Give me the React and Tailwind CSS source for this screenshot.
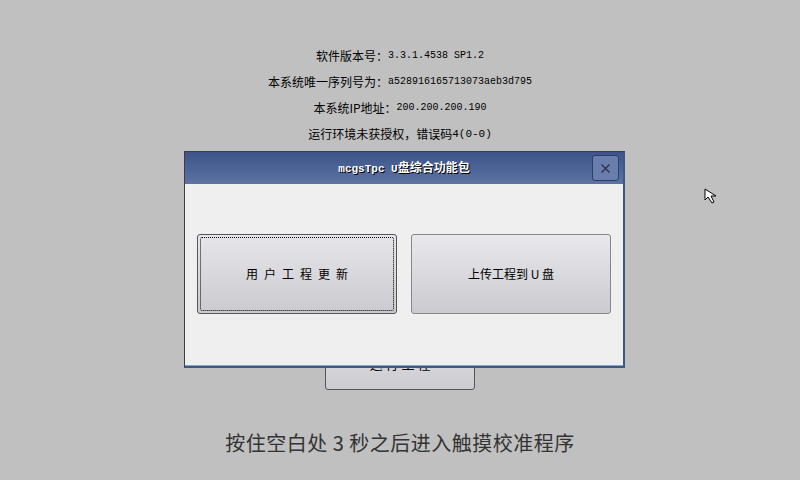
import React from 'react';

const cjk = { fontFamily: '"Noto Sans CJK SC", "Noto Sans", sans-serif' };

function InfoLine({ label, value }) {
    return (
        <div className="h-[26px] flex items-center text-[12px] text-black leading-none">
            <span style={cjk}>{label}</span>
            <span className="font-['Liberation_Mono',monospace] text-[10px]">{value}</span>
        </div>
    );
}

function Cursor() {
    return (
        <svg className="absolute left-[704px] top-[188px]" width="16" height="18" viewBox="0 0 16 18">
            <path d="M1 1 L1 12 L4 9 L8 15 L10 14 L7 8 L12 8 Z" fill="#fff" stroke="#000" strokeWidth="1" />
        </svg>
    );
}

export default function App() {
    return (
        <div className="relative w-[800px] h-[480px] overflow-hidden bg-[#c0c0c0]">
            <div className="flex flex-col items-center pt-[43px]">
                <InfoLine label="软件版本号：" value="3.3.1.4538 SP1.2" />
                <InfoLine label="本系统唯一序列号为：" value="a528916165713073aeb3d795" />
                <InfoLine label="本系统IP地址：" value="200.200.200.190" />
                <div className="h-[26px] flex items-center text-[12px] text-black leading-none" style={cjk}>
                    运行环境未获授权，错误码<span className="font-['Liberation_Mono',monospace] text-[11px]">4(0-0)</span>
                </div>

                <button className="mt-[183px] w-[150px] h-[60px] pt-[8px] rounded-[3px] border border-[#555] bg-gradient-to-b from-[#e4e4e8] to-[#cbcbd0] text-[13px] text-black" style={cjk}>
                    运 行 工 程
                </button>

                <div className="mt-[38px] text-[20px] text-[#333] tracking-[0.5px]" style={cjk}>
                    按住空白处 3 秒之后进入触摸校准程序
                </div>
            </div>

            <div className="absolute left-[184px] top-[151px] w-[441px] h-[217px] flex flex-col border border-[#3a3f4a] border-b-2 border-r-2 border-b-[#3e5a80] border-r-[#3e5a80] bg-[#efefef] shadow-[inset_0_-1px_0_#8aa3c8]">
                <div className="relative h-[32px] flex items-center justify-center bg-gradient-to-b from-[#3c5489] to-[#5e73a4]">
                    <span className="text-[12px] font-bold text-white [text-shadow:1px_1px_0_#000]" style={cjk}>
                        <span className="font-['Liberation_Mono',monospace] text-[11px]">mcgsTpc U</span>盘综合功能包
                    </span>
                    <div className="absolute right-[4px] top-[3px] w-[27px] h-[26px] flex items-center justify-center rounded-[3px] border border-[#2c3d66] bg-[#6a7eae]">
                        <svg width="11" height="11" viewBox="0 0 11 11">
                            <path d="M1.5 1.5 L9.5 9.5 M9.5 1.5 L1.5 9.5" stroke="#2e3446" strokeWidth="1.4" />
                        </svg>
                    </div>
                </div>
                <div className="flex gap-[14px] px-[12px] pt-[50px]">
                    <button className="w-[200px] h-[80px] p-[2px] rounded-[3px] border border-[#555] bg-gradient-to-b from-[#e6e6ea] to-[#cacad0]">
                        <div className="w-full h-full flex items-center justify-center border border-dotted border-black rounded-[2px] text-[12px] text-black tracking-[6px] pl-[6px]" style={cjk}>
                            用户工程更新
                        </div>
                    </button>
                    <button className="w-[200px] h-[80px] flex items-center justify-center rounded-[3px] border border-[#888] bg-gradient-to-b from-[#e8e8ec] to-[#cacad0] text-[12px] text-black" style={cjk}>
                        上传工程到 U 盘
                    </button>
                </div>
            </div>

            <Cursor />
        </div>
    );
}
